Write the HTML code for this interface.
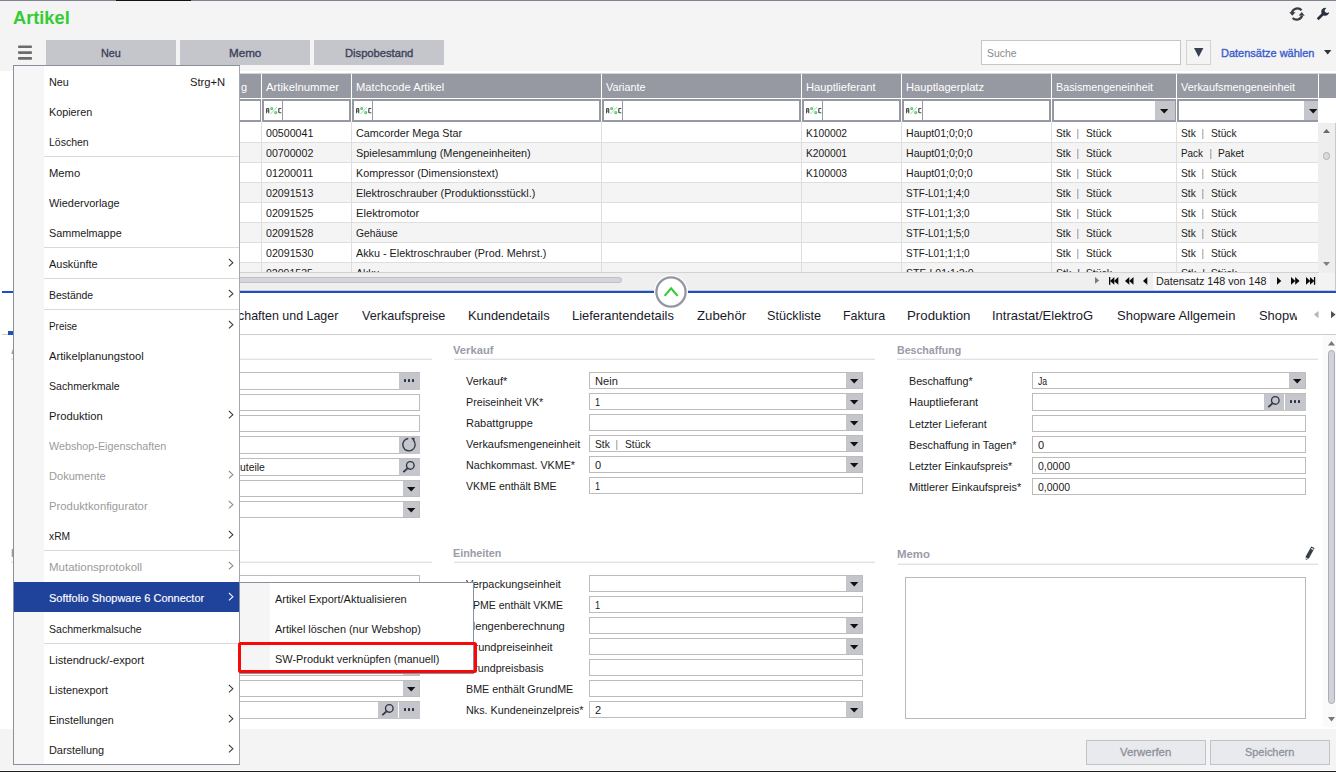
<!DOCTYPE html>
<html lang="de"><head><meta charset="utf-8"><title>Artikel</title>
<style>
html,body{margin:0;padding:0;overflow:hidden;}
body{width:1336px;height:772px;position:relative;overflow:hidden;background:#fff;font-family:"Liberation Sans", sans-serif;font-size:11px;}
div,svg,span.t{position:absolute;}
span.t{white-space:pre;line-height:1;transform-origin:0 0;}
svg{overflow:visible;}
</style></head><body>
<div style="left:0px;top:0px;width:1336px;height:71px;background:#f4f4f4;"></div>
<div style="left:0px;top:0px;width:1336px;height:1px;background:#7e8391;"></div>
<div style="left:116px;top:0px;width:75px;height:1px;background:#111111;"></div>
<span class="t" style="left:12.88px;top:9px;font-size:18px;color:#33cc33;transform:scaleX(1.0119);font-weight:700;">Artikel</span>
<svg style="left:18.4px;top:44px" width="14" height="17" viewBox="0 0 14 17"><rect x="0" y="1.5" width="14" height="2.6" rx="0.8" fill="#6c6c6c"/><rect x="0" y="7.3" width="14" height="2.6" rx="0.8" fill="#6c6c6c"/><rect x="0" y="13.1" width="14" height="2.6" rx="0.8" fill="#6c6c6c"/></svg>
<div style="left:46px;top:40px;width:130px;height:25px;background:#c5c6cc;"></div>
<span class="t" style="left:100.86px;top:48px;font-size:11px;color:#3c425c;transform:scaleX(0.9833);-webkit-text-stroke:0.35px #3c425c;">Neu</span>
<div style="left:180px;top:40px;width:130px;height:25px;background:#c5c6cc;"></div>
<span class="t" style="left:228.86px;top:48px;font-size:11px;color:#3c425c;transform:scaleX(1.0585);-webkit-text-stroke:0.35px #3c425c;">Memo</span>
<div style="left:314px;top:40px;width:130px;height:25px;background:#c5c6cc;"></div>
<span class="t" style="left:344.66px;top:48px;font-size:11px;color:#3c425c;transform:scaleX(1.0159);-webkit-text-stroke:0.35px #3c425c;">Dispobestand</span>
<div style="left:981px;top:40px;width:200px;height:25px;background:#ffffff;border:1px solid #c6c6c6;box-sizing:border-box;"></div>
<span class="t" style="left:987.06px;top:48px;font-size:11px;color:#8a8a8a;transform:scaleX(0.9470);">Suche</span>
<div style="left:1186px;top:40px;width:25px;height:25px;background:#f4f4f4;border:1px solid #d2d2d2;box-sizing:border-box;"></div>
<svg style="left:1194px;top:48px" width="10" height="9" viewBox="0 0 10 9"><path d="M0,0 L9.4,0 L4.7,9 Z" fill="#3a3f52"/></svg>
<span class="t" style="left:1221.26px;top:48px;font-size:11px;color:#3a5ccc;transform:scaleX(0.9988);-webkit-text-stroke:0.35px #3a5ccc;">Datensätze wählen</span>
<svg style="left:1324px;top:50px" width="8" height="5" viewBox="0 0 8 5"><path d="M0,0 L7.4,0 L3.7,4.4 Z" fill="#333"/></svg>
<svg style="left:1289px;top:6px" width="16" height="16" viewBox="0 0 16 16"><g fill="none" stroke="#3b3d44" stroke-width="2.2"><path d="M2.9,6.6 A5.7,5.7 0 0 1 12.6,4.3"/><path d="M13.1,9.6 A5.7,5.7 0 0 1 3.6,12.0"/></g><path d="M0.3,5.9 L6.5,6.3 L3.2,9.7 Z" fill="#3b3d44"/><path d="M15.7,9.7 L9.7,9.5 L12.8,6.1 Z" fill="#3b3d44"/></svg>
<svg style="left:1316px;top:7px" width="14" height="14" viewBox="0 0 14 14"><path d="M1.7,12.2 L8.2,5.7" stroke="#2b3040" stroke-width="2.7" fill="none" stroke-linecap="butt"/><path d="M10.4,0.9 A4.0,4.0 0 1 0 13.2,5.2 L11.0,6.0 L9.0,5.0 L8.6,2.9 Z" fill="#2b3040"/></svg>
<div style="left:13px;top:73px;width:1323px;height:1px;background:#d4d4d8;"></div>
<div style="left:13px;top:74px;width:1323px;height:24px;background:#9698a2;"></div>
<div style="left:13px;top:99px;width:1305px;height:23px;background:#9698a2;"></div>
<div style="left:13px;top:142px;width:1305px;height:1px;background:#dedede;"></div>
<div style="left:13px;top:143px;width:1305px;height:20px;background:#f4f4f4;"></div>
<div style="left:13px;top:162px;width:1305px;height:1px;background:#dedede;"></div>
<div style="left:13px;top:182px;width:1305px;height:1px;background:#dedede;"></div>
<div style="left:13px;top:183px;width:1305px;height:20px;background:#f4f4f4;"></div>
<div style="left:13px;top:202px;width:1305px;height:1px;background:#dedede;"></div>
<div style="left:13px;top:222px;width:1305px;height:1px;background:#dedede;"></div>
<div style="left:13px;top:223px;width:1305px;height:20px;background:#f4f4f4;"></div>
<div style="left:13px;top:242px;width:1305px;height:1px;background:#dedede;"></div>
<div style="left:13px;top:262px;width:1305px;height:1px;background:#dedede;"></div>
<div style="left:13px;top:263px;width:1305px;height:9px;background:#f4f4f4;"></div>
<div style="left:261px;top:74px;width:1px;height:48px;background:#ffffff;"></div>
<div style="left:261px;top:122px;width:1px;height:150px;background:#dedede;"></div>
<div style="left:351px;top:74px;width:1px;height:48px;background:#ffffff;"></div>
<div style="left:351px;top:122px;width:1px;height:150px;background:#dedede;"></div>
<div style="left:601px;top:74px;width:1px;height:48px;background:#ffffff;"></div>
<div style="left:601px;top:122px;width:1px;height:150px;background:#dedede;"></div>
<div style="left:801px;top:74px;width:1px;height:48px;background:#ffffff;"></div>
<div style="left:801px;top:122px;width:1px;height:150px;background:#dedede;"></div>
<div style="left:901px;top:74px;width:1px;height:48px;background:#ffffff;"></div>
<div style="left:901px;top:122px;width:1px;height:150px;background:#dedede;"></div>
<div style="left:1051px;top:74px;width:1px;height:48px;background:#ffffff;"></div>
<div style="left:1051px;top:122px;width:1px;height:150px;background:#dedede;"></div>
<div style="left:1176px;top:74px;width:1px;height:48px;background:#ffffff;"></div>
<div style="left:1176px;top:122px;width:1px;height:150px;background:#dedede;"></div>
<div style="left:1318px;top:74px;width:1px;height:48px;background:#ffffff;"></div>
<div style="left:13px;top:101px;width:247px;height:19px;background:#ffffff;"></div>
<div style="left:264px;top:101px;width:85px;height:19px;background:#ffffff;"></div>
<div style="left:354px;top:101px;width:245px;height:19px;background:#ffffff;"></div>
<div style="left:604px;top:101px;width:195px;height:19px;background:#ffffff;"></div>
<div style="left:804px;top:101px;width:95px;height:19px;background:#ffffff;"></div>
<div style="left:904px;top:101px;width:145px;height:19px;background:#ffffff;"></div>
<div style="left:1054px;top:101px;width:120px;height:19px;background:#ffffff;"></div>
<div style="left:1179px;top:101px;width:137px;height:19px;background:#ffffff;"></div>
<svg style="left:266px;top:108px" width="16" height="6" viewBox="0 0 16 6"><g fill="#484848"><path d="M0,1.2 Q0,0 1.2,0 L2.1,0 Q3.3,0 3.3,1.2 L3.3,5.3 L2.2,5.3 L2.2,3.6 L1.1,3.6 L1.1,5.3 L0,5.3 Z M1.1,1.2 L1.1,2.5 L2.2,2.5 L2.2,1.2 Z" fill-rule="evenodd"/><path d="M12.2,1.2 Q12.2,0 13.4,0 L15.3,0 L15.3,1.1 L13.4,1.1 L13.4,4.2 L15.3,4.2 L15.3,5.3 L13.4,5.3 Q12.2,5.3 12.2,4.1 Z"/></g><g fill="none" stroke="#62c679"><circle cx="5.7" cy="0.5" r="1.0" stroke-width="1.25"/><circle cx="9.7" cy="4.6" r="1.0" stroke-width="1.25"/><path d="M11.0,-0.9 L4.4,6.0" stroke-width="0.9" stroke="#8fd89e"/></g></svg>
<div style="left:282px;top:101px;width:1px;height:19px;background:#9698a2;"></div>
<svg style="left:356px;top:108px" width="16" height="6" viewBox="0 0 16 6"><g fill="#484848"><path d="M0,1.2 Q0,0 1.2,0 L2.1,0 Q3.3,0 3.3,1.2 L3.3,5.3 L2.2,5.3 L2.2,3.6 L1.1,3.6 L1.1,5.3 L0,5.3 Z M1.1,1.2 L1.1,2.5 L2.2,2.5 L2.2,1.2 Z" fill-rule="evenodd"/><path d="M12.2,1.2 Q12.2,0 13.4,0 L15.3,0 L15.3,1.1 L13.4,1.1 L13.4,4.2 L15.3,4.2 L15.3,5.3 L13.4,5.3 Q12.2,5.3 12.2,4.1 Z"/></g><g fill="none" stroke="#62c679"><circle cx="5.7" cy="0.5" r="1.0" stroke-width="1.25"/><circle cx="9.7" cy="4.6" r="1.0" stroke-width="1.25"/><path d="M11.0,-0.9 L4.4,6.0" stroke-width="0.9" stroke="#8fd89e"/></g></svg>
<div style="left:372px;top:101px;width:1px;height:19px;background:#9698a2;"></div>
<svg style="left:606px;top:108px" width="16" height="6" viewBox="0 0 16 6"><g fill="#484848"><path d="M0,1.2 Q0,0 1.2,0 L2.1,0 Q3.3,0 3.3,1.2 L3.3,5.3 L2.2,5.3 L2.2,3.6 L1.1,3.6 L1.1,5.3 L0,5.3 Z M1.1,1.2 L1.1,2.5 L2.2,2.5 L2.2,1.2 Z" fill-rule="evenodd"/><path d="M12.2,1.2 Q12.2,0 13.4,0 L15.3,0 L15.3,1.1 L13.4,1.1 L13.4,4.2 L15.3,4.2 L15.3,5.3 L13.4,5.3 Q12.2,5.3 12.2,4.1 Z"/></g><g fill="none" stroke="#62c679"><circle cx="5.7" cy="0.5" r="1.0" stroke-width="1.25"/><circle cx="9.7" cy="4.6" r="1.0" stroke-width="1.25"/><path d="M11.0,-0.9 L4.4,6.0" stroke-width="0.9" stroke="#8fd89e"/></g></svg>
<div style="left:622px;top:101px;width:1px;height:19px;background:#9698a2;"></div>
<svg style="left:806px;top:108px" width="16" height="6" viewBox="0 0 16 6"><g fill="#484848"><path d="M0,1.2 Q0,0 1.2,0 L2.1,0 Q3.3,0 3.3,1.2 L3.3,5.3 L2.2,5.3 L2.2,3.6 L1.1,3.6 L1.1,5.3 L0,5.3 Z M1.1,1.2 L1.1,2.5 L2.2,2.5 L2.2,1.2 Z" fill-rule="evenodd"/><path d="M12.2,1.2 Q12.2,0 13.4,0 L15.3,0 L15.3,1.1 L13.4,1.1 L13.4,4.2 L15.3,4.2 L15.3,5.3 L13.4,5.3 Q12.2,5.3 12.2,4.1 Z"/></g><g fill="none" stroke="#62c679"><circle cx="5.7" cy="0.5" r="1.0" stroke-width="1.25"/><circle cx="9.7" cy="4.6" r="1.0" stroke-width="1.25"/><path d="M11.0,-0.9 L4.4,6.0" stroke-width="0.9" stroke="#8fd89e"/></g></svg>
<div style="left:822px;top:101px;width:1px;height:19px;background:#9698a2;"></div>
<svg style="left:906px;top:108px" width="16" height="6" viewBox="0 0 16 6"><g fill="#484848"><path d="M0,1.2 Q0,0 1.2,0 L2.1,0 Q3.3,0 3.3,1.2 L3.3,5.3 L2.2,5.3 L2.2,3.6 L1.1,3.6 L1.1,5.3 L0,5.3 Z M1.1,1.2 L1.1,2.5 L2.2,2.5 L2.2,1.2 Z" fill-rule="evenodd"/><path d="M12.2,1.2 Q12.2,0 13.4,0 L15.3,0 L15.3,1.1 L13.4,1.1 L13.4,4.2 L15.3,4.2 L15.3,5.3 L13.4,5.3 Q12.2,5.3 12.2,4.1 Z"/></g><g fill="none" stroke="#62c679"><circle cx="5.7" cy="0.5" r="1.0" stroke-width="1.25"/><circle cx="9.7" cy="4.6" r="1.0" stroke-width="1.25"/><path d="M11.0,-0.9 L4.4,6.0" stroke-width="0.9" stroke="#8fd89e"/></g></svg>
<div style="left:922px;top:101px;width:1px;height:19px;background:#9698a2;"></div>
<div style="left:1155px;top:101px;width:20px;height:19px;background:#c5c6cc;"></div>
<svg style="left:1160px;top:109px" width="9" height="5" viewBox="0 0 9 5"><path d="M0,0 L8.4,0 L4.2,4.4 Z" fill="#111"/></svg>
<div style="left:1304px;top:101px;width:14px;height:19px;background:#c5c6cc;"></div>
<svg style="left:1309px;top:109px" width="9" height="5" viewBox="0 0 9 5"><path d="M0,0 L8.4,0 L4.2,4.4 Z" fill="#111"/></svg>
<div style="left:1318px;top:99px;width:18px;height:24px;background:#ffffff;"></div>
<span class="t" style="left:241.16px;top:82px;font-size:11px;color:#ffffff;transform:scaleX(1.0041);">g</span>
<span class="t" style="left:265.56px;top:82px;font-size:11px;color:#ffffff;transform:scaleX(1.0302);">Artikelnummer</span>
<span class="t" style="left:355.86px;top:82px;font-size:11px;color:#ffffff;transform:scaleX(1.0164);">Matchcode Artikel</span>
<span class="t" style="left:605.56px;top:82px;font-size:11px;color:#ffffff;transform:scaleX(0.9849);">Variante</span>
<span class="t" style="left:806.06px;top:82px;font-size:11px;color:#ffffff;transform:scaleX(1.0153);">Hauptlieferant</span>
<span class="t" style="left:906.06px;top:82px;font-size:11px;color:#ffffff;transform:scaleX(1.0128);">Hauptlagerplatz</span>
<span class="t" style="left:1056.06px;top:82px;font-size:11px;color:#ffffff;transform:scaleX(0.9795);">Basismengeneinheit</span>
<span class="t" style="left:1180.86px;top:82px;font-size:11px;color:#ffffff;transform:scaleX(0.9920);">Verkaufsmengeneinheit</span>
<span class="t" style="left:265.56px;top:128px;font-size:11px;color:#1a1a1a;transform:scaleX(0.9673);">00500041</span>
<span class="t" style="left:355.86px;top:128px;font-size:11px;color:#1a1a1a;transform:scaleX(0.9800);">Camcorder Mega Star</span>
<span class="t" style="left:806.06px;top:128px;font-size:11px;color:#1a1a1a;transform:scaleX(0.9320);">K100002</span>
<span class="t" style="left:906.06px;top:128px;font-size:11px;color:#1a1a1a;transform:scaleX(0.9627);">Haupt01;0;0;0</span>
<span class="t" style="left:1056.06px;top:128px;font-size:11px;color:#1a1a1a;transform:scaleX(0.9273);">Stk</span>
<span class="t" style="left:1077.36px;top:128px;font-size:11px;color:#1a1a1a;transform:scaleX(0.5421);">|</span>
<span class="t" style="left:1085.56px;top:128px;font-size:11px;color:#1a1a1a;transform:scaleX(0.9286);">Stück</span>
<span class="t" style="left:1181.06px;top:128px;font-size:11px;color:#1a1a1a;transform:scaleX(0.9273);">Stk</span>
<span class="t" style="left:1202.36px;top:128px;font-size:11px;color:#1a1a1a;transform:scaleX(0.5421);">|</span>
<span class="t" style="left:1210.56px;top:128px;font-size:11px;color:#1a1a1a;transform:scaleX(0.9286);">Stück</span>
<span class="t" style="left:265.56px;top:148px;font-size:11px;color:#1a1a1a;transform:scaleX(0.9673);">00700002</span>
<span class="t" style="left:355.86px;top:148px;font-size:11px;color:#1a1a1a;transform:scaleX(0.9923);">Spielesammlung (Mengeneinheiten)</span>
<span class="t" style="left:806.06px;top:148px;font-size:11px;color:#1a1a1a;transform:scaleX(0.9320);">K200001</span>
<span class="t" style="left:906.06px;top:148px;font-size:11px;color:#1a1a1a;transform:scaleX(0.9627);">Haupt01;0;0;0</span>
<span class="t" style="left:1056.06px;top:148px;font-size:11px;color:#1a1a1a;transform:scaleX(0.9273);">Stk</span>
<span class="t" style="left:1077.36px;top:148px;font-size:11px;color:#1a1a1a;transform:scaleX(0.5421);">|</span>
<span class="t" style="left:1085.56px;top:148px;font-size:11px;color:#1a1a1a;transform:scaleX(0.9286);">Stück</span>
<span class="t" style="left:1181.06px;top:148px;font-size:11px;color:#1a1a1a;transform:scaleX(0.9011);">Pack</span>
<span class="t" style="left:1209.66px;top:148px;font-size:11px;color:#1a1a1a;transform:scaleX(0.5421);">|</span>
<span class="t" style="left:1217.66px;top:148px;font-size:11px;color:#1a1a1a;transform:scaleX(0.9222);">Paket</span>
<span class="t" style="left:265.56px;top:168px;font-size:11px;color:#1a1a1a;transform:scaleX(0.9839);">01200011</span>
<span class="t" style="left:355.86px;top:168px;font-size:11px;color:#1a1a1a;transform:scaleX(0.9819);">Kompressor (Dimensionstext)</span>
<span class="t" style="left:806.06px;top:168px;font-size:11px;color:#1a1a1a;transform:scaleX(0.9320);">K100003</span>
<span class="t" style="left:906.06px;top:168px;font-size:11px;color:#1a1a1a;transform:scaleX(0.9627);">Haupt01;0;0;0</span>
<span class="t" style="left:1056.06px;top:168px;font-size:11px;color:#1a1a1a;transform:scaleX(0.9273);">Stk</span>
<span class="t" style="left:1077.36px;top:168px;font-size:11px;color:#1a1a1a;transform:scaleX(0.5421);">|</span>
<span class="t" style="left:1085.56px;top:168px;font-size:11px;color:#1a1a1a;transform:scaleX(0.9286);">Stück</span>
<span class="t" style="left:1181.06px;top:168px;font-size:11px;color:#1a1a1a;transform:scaleX(0.9273);">Stk</span>
<span class="t" style="left:1202.36px;top:168px;font-size:11px;color:#1a1a1a;transform:scaleX(0.5421);">|</span>
<span class="t" style="left:1210.56px;top:168px;font-size:11px;color:#1a1a1a;transform:scaleX(0.9286);">Stück</span>
<span class="t" style="left:265.56px;top:188px;font-size:11px;color:#1a1a1a;transform:scaleX(0.9673);">02091513</span>
<span class="t" style="left:355.86px;top:188px;font-size:11px;color:#1a1a1a;transform:scaleX(0.9806);">Elektroschrauber (Produktionsstückl.)</span>
<span class="t" style="left:906.06px;top:188px;font-size:11px;color:#1a1a1a;transform:scaleX(0.9036);">STF-L01;1;4;0</span>
<span class="t" style="left:1056.06px;top:188px;font-size:11px;color:#1a1a1a;transform:scaleX(0.9273);">Stk</span>
<span class="t" style="left:1077.36px;top:188px;font-size:11px;color:#1a1a1a;transform:scaleX(0.5421);">|</span>
<span class="t" style="left:1085.56px;top:188px;font-size:11px;color:#1a1a1a;transform:scaleX(0.9286);">Stück</span>
<span class="t" style="left:1181.06px;top:188px;font-size:11px;color:#1a1a1a;transform:scaleX(0.9273);">Stk</span>
<span class="t" style="left:1202.36px;top:188px;font-size:11px;color:#1a1a1a;transform:scaleX(0.5421);">|</span>
<span class="t" style="left:1210.56px;top:188px;font-size:11px;color:#1a1a1a;transform:scaleX(0.9286);">Stück</span>
<span class="t" style="left:265.56px;top:208px;font-size:11px;color:#1a1a1a;transform:scaleX(0.9673);">02091525</span>
<span class="t" style="left:355.86px;top:208px;font-size:11px;color:#1a1a1a;transform:scaleX(1.0143);">Elektromotor</span>
<span class="t" style="left:906.06px;top:208px;font-size:11px;color:#1a1a1a;transform:scaleX(0.9036);">STF-L01;1;3;0</span>
<span class="t" style="left:1056.06px;top:208px;font-size:11px;color:#1a1a1a;transform:scaleX(0.9273);">Stk</span>
<span class="t" style="left:1077.36px;top:208px;font-size:11px;color:#1a1a1a;transform:scaleX(0.5421);">|</span>
<span class="t" style="left:1085.56px;top:208px;font-size:11px;color:#1a1a1a;transform:scaleX(0.9286);">Stück</span>
<span class="t" style="left:1181.06px;top:208px;font-size:11px;color:#1a1a1a;transform:scaleX(0.9273);">Stk</span>
<span class="t" style="left:1202.36px;top:208px;font-size:11px;color:#1a1a1a;transform:scaleX(0.5421);">|</span>
<span class="t" style="left:1210.56px;top:208px;font-size:11px;color:#1a1a1a;transform:scaleX(0.9286);">Stück</span>
<span class="t" style="left:265.56px;top:228px;font-size:11px;color:#1a1a1a;transform:scaleX(0.9673);">02091528</span>
<span class="t" style="left:355.86px;top:228px;font-size:11px;color:#1a1a1a;transform:scaleX(0.9349);">Gehäuse</span>
<span class="t" style="left:906.06px;top:228px;font-size:11px;color:#1a1a1a;transform:scaleX(0.9036);">STF-L01;1;5;0</span>
<span class="t" style="left:1056.06px;top:228px;font-size:11px;color:#1a1a1a;transform:scaleX(0.9273);">Stk</span>
<span class="t" style="left:1077.36px;top:228px;font-size:11px;color:#1a1a1a;transform:scaleX(0.5421);">|</span>
<span class="t" style="left:1085.56px;top:228px;font-size:11px;color:#1a1a1a;transform:scaleX(0.9286);">Stück</span>
<span class="t" style="left:1181.06px;top:228px;font-size:11px;color:#1a1a1a;transform:scaleX(0.9273);">Stk</span>
<span class="t" style="left:1202.36px;top:228px;font-size:11px;color:#1a1a1a;transform:scaleX(0.5421);">|</span>
<span class="t" style="left:1210.56px;top:228px;font-size:11px;color:#1a1a1a;transform:scaleX(0.9286);">Stück</span>
<span class="t" style="left:265.56px;top:248px;font-size:11px;color:#1a1a1a;transform:scaleX(0.9673);">02091530</span>
<span class="t" style="left:355.86px;top:248px;font-size:11px;color:#1a1a1a;transform:scaleX(0.9817);">Akku - Elektroschrauber (Prod. Mehrst.)</span>
<span class="t" style="left:906.06px;top:248px;font-size:11px;color:#1a1a1a;transform:scaleX(0.9036);">STF-L01;1;1;0</span>
<span class="t" style="left:1056.06px;top:248px;font-size:11px;color:#1a1a1a;transform:scaleX(0.9273);">Stk</span>
<span class="t" style="left:1077.36px;top:248px;font-size:11px;color:#1a1a1a;transform:scaleX(0.5421);">|</span>
<span class="t" style="left:1085.56px;top:248px;font-size:11px;color:#1a1a1a;transform:scaleX(0.9286);">Stück</span>
<span class="t" style="left:1181.06px;top:248px;font-size:11px;color:#1a1a1a;transform:scaleX(0.9273);">Stk</span>
<span class="t" style="left:1202.36px;top:248px;font-size:11px;color:#1a1a1a;transform:scaleX(0.5421);">|</span>
<span class="t" style="left:1210.56px;top:248px;font-size:11px;color:#1a1a1a;transform:scaleX(0.9286);">Stück</span>
<div style="left:240px;top:263px;width:1079px;height:9px;overflow:hidden"><span class="t" style="left:26px;top:5px;font-size:11px;color:#1a1a1a;transform:scaleX(0.96)">02091535</span><span class="t" style="left:116px;top:5px;font-size:11px;color:#1a1a1a;transform:scaleX(0.96)">Akku</span><span class="t" style="left:666px;top:5px;font-size:11px;color:#1a1a1a;transform:scaleX(0.96)">STF-L01;1;2;0</span><span class="t" style="left:816px;top:5px;font-size:11px;color:#1a1a1a;transform:scaleX(0.96)">Stk  |  Stück</span><span class="t" style="left:941px;top:5px;font-size:11px;color:#1a1a1a;transform:scaleX(0.96)">Stk  |  Stück</span></div>
<div style="left:1318px;top:123px;width:17px;height:149px;background:#eeeeef;"></div>
<svg style="left:1323px;top:129px" width="7" height="4" viewBox="0 0 7 4"><path d="M0,3.9 L7,3.9 L3.5,0 Z" fill="#6a6a6a"/></svg>
<svg style="left:1323px;top:262px" width="7" height="4" viewBox="0 0 7 4"><path d="M0,0 L7,0 L3.5,4 Z" fill="#808080"/></svg>
<div style="left:1323px;top:152px;width:7px;height:8px;background:#dadade;border:1px solid #b0b0b6;box-sizing:border-box;border-radius:4px;"></div>
<div style="left:13px;top:272px;width:1323px;height:19px;background:#efeff0;"></div>
<div style="left:13px;top:272px;width:1306px;height:1px;background:#d2d2d2;"></div>
<div style="left:13px;top:290px;width:1323px;height:1px;background:#c8c8c8;"></div>
<div style="left:1318px;top:273px;width:17px;height:17px;background:#f3f3f3;"></div>
<div style="left:200px;top:277px;width:422px;height:6px;background:#d5d6db;border:1px solid #bfc0c8;box-sizing:border-box;border-radius:3px;"></div>
<div style="left:1153px;top:273px;width:117px;height:17px;background:#f9f9f9;"></div>
<span class="t" style="left:1156.36px;top:276px;font-size:11px;color:#1a1a1a;transform:scaleX(0.9762);">Datensatz 148 von 148</span>
<svg style="left:1094.9px;top:277.2px" width="6" height="8" viewBox="0 0 6 8"><path d="M0,0 L0,6.8 L4.2,3.4 Z" fill="#7a7a7a"/></svg>
<svg style="left:1108.9px;top:277px" width="12" height="8" viewBox="0 0 12 8"><rect x="0" y="0" width="1.3" height="7.8" fill="#0a0a0a"/><path d="M5.3,0 L5.3,7.8 L1.0,3.9 Z" fill="#0a0a0a"/><path d="M9.3,0 L9.3,7.8 L5.0,3.9 Z" fill="#0a0a0a"/></svg>
<svg style="left:1124.9px;top:277px" width="12" height="8" viewBox="0 0 12 8"><path d="M4.3,0 L4.3,7.8 L0,3.9 Z" fill="#0a0a0a"/><path d="M8.5,0 L8.5,7.8 L4.2,3.9 Z" fill="#0a0a0a"/></svg>
<svg style="left:1142.8px;top:277px" width="6" height="8" viewBox="0 0 6 8"><path d="M4.3,0 L4.3,7.8 L0,3.9 Z" fill="#0a0a0a"/></svg>
<svg style="left:1276.8px;top:277px" width="6" height="8" viewBox="0 0 6 8"><path d="M0,0 L0,7.8 L4.3,3.9 Z" fill="#0a0a0a"/></svg>
<svg style="left:1290.8px;top:277px" width="12" height="8" viewBox="0 0 12 8"><path d="M0,0 L0,7.8 L4.3,3.9 Z" fill="#0a0a0a"/><path d="M4.2,0 L4.2,7.8 L8.5,3.9 Z" fill="#0a0a0a"/></svg>
<svg style="left:1305.8px;top:277px" width="12" height="8" viewBox="0 0 12 8"><path d="M0,0 L0,7.8 L4.3,3.9 Z" fill="#0a0a0a"/><path d="M4.0,0 L4.0,7.8 L8.3,3.9 Z" fill="#0a0a0a"/><rect x="7.9" y="0" width="1.3" height="7.8" fill="#0a0a0a"/></svg>
<div style="left:1335px;top:123px;width:1px;height:168px;background:#c9c9c9;"></div>
<div style="left:0px;top:291px;width:1336px;height:2px;background:#1b4fc4;"></div>
<div style="left:0px;top:291px;width:2px;height:2px;background:#ffffff;"></div>
<div style="left:654px;top:275px;width:34px;height:34px;border-radius:17px;background:#fff"></div>
<svg style="left:654px;top:275px" width="34" height="34" viewBox="0 0 34 34"><circle cx="17" cy="17" r="14.6" fill="#fff" stroke="#9496a2" stroke-width="2.3"/></svg>
<svg style="left:663px;top:286px" width="16" height="11" viewBox="0 0 16 11"><path d="M1.6,9.9 L8.1,2.4 L14.6,9.9" fill="none" stroke="#2ecc2e" stroke-width="2.0" stroke-linejoin="miter"/></svg>
<div style="left:2px;top:334px;width:1334px;height:1px;background:#cdcdcd;"></div>
<div style="left:8px;top:331px;width:6px;height:4px;background:#1b4fc4;"></div>
<span class="t" style="left:199.98px;top:309px;font-size:13px;color:#1a1a2a;transform:scaleX(0.9570);">Eigenschaften und Lager</span>
<span class="t" style="left:362.48px;top:309px;font-size:13px;color:#1a1a2a;transform:scaleX(0.9680);">Verkaufspreise</span>
<span class="t" style="left:468.28px;top:309px;font-size:13px;color:#1a1a2a;transform:scaleX(0.9908);">Kundendetails</span>
<span class="t" style="left:572.28px;top:309px;font-size:13px;color:#1a1a2a;transform:scaleX(0.9923);">Lieferantendetails</span>
<span class="t" style="left:697.48px;top:309px;font-size:13px;color:#1a1a2a;transform:scaleX(1.0150);">Zubehör</span>
<span class="t" style="left:767.48px;top:309px;font-size:13px;color:#1a1a2a;transform:scaleX(0.9732);">Stückliste</span>
<span class="t" style="left:843.48px;top:309px;font-size:13px;color:#1a1a2a;transform:scaleX(0.9563);">Faktura</span>
<span class="t" style="left:907.18px;top:309px;font-size:13px;color:#1a1a2a;transform:scaleX(1.0208);">Produktion</span>
<span class="t" style="left:992.48px;top:309px;font-size:13px;color:#1a1a2a;transform:scaleX(0.9999);">Intrastat/ElektroG</span>
<span class="t" style="left:1117.18px;top:309px;font-size:13px;color:#1a1a2a;transform:scaleX(0.9993);">Shopware Allgemein</span>
<div style="left:1258.98px;top:307px;width:38.2px;height:19px;overflow:hidden"><span class="t" style="left:0;top:2px;font-size:13px;color:#1a1a2a;transform:scaleX(0.9932);">Shopware</span></div>
<svg style="left:1313.8px;top:310.6px" width="6" height="8" viewBox="0 0 6 8"><path d="M4.5,0 L4.5,7.2 L0,3.6 Z" fill="#b4b4b4"/></svg>
<svg style="left:1330.9px;top:310.6px" width="5" height="8" viewBox="0 0 5 8"><path d="M0,0 L0,7.2 L4.6,3.6 Z" fill="#505050"/></svg>
<span class="t" style="left:10.76px;top:345px;font-size:11px;color:#9a9ca8;transform:scaleX(0.9576);font-weight:700;">Allgemein</span>
<div style="left:11px;top:358px;width:421px;height:1px;background:#f3f3f5;"></div>
<div style="left:11px;top:359px;width:421px;height:1px;background:#e2e2e6;"></div>
<span class="t" style="left:453.36px;top:345px;font-size:11px;color:#9a9ca8;transform:scaleX(1.0176);font-weight:700;">Verkauf</span>
<div style="left:453.8px;top:358px;width:421.7px;height:1px;background:#f3f3f5;"></div>
<div style="left:453.8px;top:359px;width:421.7px;height:1px;background:#e2e2e6;"></div>
<span class="t" style="left:896.76px;top:345px;font-size:11px;color:#9a9ca8;transform:scaleX(0.9644);font-weight:700;">Beschaffung</span>
<div style="left:897.2px;top:358px;width:420.79999999999995px;height:1px;background:#f3f3f5;"></div>
<div style="left:897.2px;top:359px;width:420.79999999999995px;height:1px;background:#e2e2e6;"></div>
<span class="t" style="left:10.76px;top:548px;font-size:11px;color:#9a9ca8;transform:scaleX(0.9483);font-weight:700;">Kennzeichen</span>
<div style="left:11px;top:561px;width:421px;height:1px;background:#f3f3f5;"></div>
<div style="left:11px;top:562px;width:421px;height:1px;background:#e2e2e6;"></div>
<span class="t" style="left:453.36px;top:548px;font-size:11px;color:#9a9ca8;transform:scaleX(0.9765);font-weight:700;">Einheiten</span>
<div style="left:453.8px;top:561px;width:421.7px;height:1px;background:#f3f3f5;"></div>
<div style="left:453.8px;top:562px;width:421.7px;height:1px;background:#e2e2e6;"></div>
<span class="t" style="left:897.16px;top:549px;font-size:11px;color:#9a9ca8;transform:scaleX(1.0368);font-weight:700;">Memo</span>
<div style="left:897.6px;top:563px;width:420.4px;height:1px;background:#f3f3f5;"></div>
<div style="left:897.6px;top:564px;width:420.4px;height:1px;background:#e2e2e6;"></div>
<div style="left:146px;top:372px;width:274px;height:18px;background:#ffffff;border:1px solid #bdbcbb;box-sizing:border-box;"></div>
<div style="left:399px;top:373px;width:21px;height:17px;background:#c5c6cc;"></div>
<div style="left:404px;top:379px;width:2px;height:3px;background:#2f3346;border-radius:0.5px;"></div>
<div style="left:408px;top:379px;width:2px;height:3px;background:#2f3346;border-radius:0.5px;"></div>
<div style="left:412px;top:379px;width:2px;height:3px;background:#2f3346;border-radius:0.5px;"></div>
<div style="left:146px;top:394px;width:274px;height:17px;background:#ffffff;border:1px solid #bdbcbb;box-sizing:border-box;"></div>
<div style="left:146px;top:415px;width:274px;height:17px;background:#ffffff;border:1px solid #bdbcbb;box-sizing:border-box;"></div>
<div style="left:146px;top:436px;width:274px;height:18px;background:#ffffff;border:1px solid #bdbcbb;box-sizing:border-box;"></div>
<div style="left:399px;top:437px;width:21px;height:17px;background:#c5c6cc;"></div>
<svg style="left:399px;top:437px" width="21" height="17" viewBox="0 0 21 17"><path d="M9.24,1.45 A6.2,6.2 0 1 0 14.38,3.22" fill="none" stroke="#353a4c" stroke-width="1.4"/><path d="M12.0,1.0 L15.5,0.8 L15.3,4.6 Z" fill="#353a4c"/></svg>
<div style="left:146px;top:458px;width:274px;height:18px;background:#ffffff;border:1px solid #bdbcbb;box-sizing:border-box;"></div>
<div style="left:399px;top:459px;width:21px;height:17px;background:#c5c6cc;"></div>
<svg style="left:402px;top:460px" width="14" height="14" viewBox="0 0 14 14"><circle cx="8.3" cy="5.4" r="3.8" fill="none" stroke="#2f3346" stroke-width="1.35"/><path d="M5.5,8.3 L1.3,12.1" stroke="#2f3346" stroke-width="1.8" fill="none"/></svg>
<span class="t" style="left:239.86px;top:462px;font-size:11px;color:#1a1a1a;transform:scaleX(0.9450);">uteile</span>
<div style="left:146px;top:480px;width:274px;height:17px;background:#ffffff;border:1px solid #bdbcbb;box-sizing:border-box;"></div>
<div style="left:403px;top:481px;width:16px;height:15px;background:#c5c6cc;"></div>
<svg style="left:407px;top:487px" width="9" height="5" viewBox="0 0 9 5"><path d="M0,0 L8.4,0 L4.2,4.4 Z" fill="#111"/></svg>
<div style="left:146px;top:501px;width:274px;height:17px;background:#ffffff;border:1px solid #bdbcbb;box-sizing:border-box;"></div>
<div style="left:403px;top:502px;width:16px;height:15px;background:#c5c6cc;"></div>
<svg style="left:407px;top:508px" width="9" height="5" viewBox="0 0 9 5"><path d="M0,0 L8.4,0 L4.2,4.4 Z" fill="#111"/></svg>
<div style="left:146px;top:575px;width:274px;height:17px;background:#ffffff;border:1px solid #bdbcbb;box-sizing:border-box;"></div>
<div style="left:146px;top:596px;width:274px;height:17px;background:#ffffff;border:1px solid #bdbcbb;box-sizing:border-box;"></div>
<div style="left:146px;top:617px;width:274px;height:17px;background:#ffffff;border:1px solid #bdbcbb;box-sizing:border-box;"></div>
<div style="left:146px;top:638px;width:274px;height:17px;background:#ffffff;border:1px solid #bdbcbb;box-sizing:border-box;"></div>
<div style="left:146px;top:659px;width:274px;height:17px;background:#ffffff;border:1px solid #bdbcbb;box-sizing:border-box;"></div>
<div style="left:403px;top:660px;width:16px;height:15px;background:#c5c6cc;"></div>
<svg style="left:407px;top:666px" width="9" height="5" viewBox="0 0 9 5"><path d="M0,0 L8.4,0 L4.2,4.4 Z" fill="#111"/></svg>
<div style="left:146px;top:680px;width:274px;height:17px;background:#ffffff;border:1px solid #bdbcbb;box-sizing:border-box;"></div>
<div style="left:403px;top:681px;width:16px;height:15px;background:#c5c6cc;"></div>
<svg style="left:407px;top:687px" width="9" height="5" viewBox="0 0 9 5"><path d="M0,0 L8.4,0 L4.2,4.4 Z" fill="#111"/></svg>
<div style="left:146px;top:701px;width:274px;height:18px;background:#ffffff;border:1px solid #bdbcbb;box-sizing:border-box;"></div>
<div style="left:378px;top:702px;width:20px;height:17px;background:#c5c6cc;"></div>
<svg style="left:381px;top:703px" width="14" height="14" viewBox="0 0 14 14"><circle cx="8.3" cy="5.4" r="3.8" fill="none" stroke="#2f3346" stroke-width="1.35"/><path d="M5.5,8.3 L1.3,12.1" stroke="#2f3346" stroke-width="1.8" fill="none"/></svg>
<div style="left:399px;top:702px;width:21px;height:17px;background:#c5c6cc;"></div>
<div style="left:404px;top:708px;width:2px;height:3px;background:#2f3346;border-radius:0.5px;"></div>
<div style="left:408px;top:708px;width:2px;height:3px;background:#2f3346;border-radius:0.5px;"></div>
<div style="left:412px;top:708px;width:2px;height:3px;background:#2f3346;border-radius:0.5px;"></div>
<span class="t" style="left:465.86px;top:376px;font-size:11px;color:#1a1a1a;transform:scaleX(0.9893);">Verkauf*</span>
<div style="left:589px;top:372px;width:274px;height:17px;background:#ffffff;border:1px solid #bdbcbb;box-sizing:border-box;"></div>
<div style="left:846px;top:373px;width:16px;height:15px;background:#c5c6cc;"></div>
<svg style="left:850px;top:379px" width="9" height="5" viewBox="0 0 9 5"><path d="M0,0 L8.4,0 L4.2,4.4 Z" fill="#111"/></svg>
<span class="t" style="left:595.16px;top:376px;font-size:11px;color:#1a1a1a;transform:scaleX(1.0099);">Nein</span>
<span class="t" style="left:465.86px;top:397px;font-size:11px;color:#1a1a1a;transform:scaleX(0.9717);">Preiseinheit VK*</span>
<div style="left:589px;top:393px;width:274px;height:17px;background:#ffffff;border:1px solid #bdbcbb;box-sizing:border-box;"></div>
<div style="left:846px;top:394px;width:16px;height:15px;background:#c5c6cc;"></div>
<svg style="left:850px;top:400px" width="9" height="5" viewBox="0 0 9 5"><path d="M0,0 L8.4,0 L4.2,4.4 Z" fill="#111"/></svg>
<span class="t" style="left:595.16px;top:397px;font-size:11px;color:#1a1a1a;transform:scaleX(0.8408);">1</span>
<span class="t" style="left:465.86px;top:418px;font-size:11px;color:#1a1a1a;transform:scaleX(1.0027);">Rabattgruppe</span>
<div style="left:589px;top:414px;width:274px;height:17px;background:#ffffff;border:1px solid #bdbcbb;box-sizing:border-box;"></div>
<div style="left:846px;top:415px;width:16px;height:15px;background:#c5c6cc;"></div>
<svg style="left:850px;top:421px" width="9" height="5" viewBox="0 0 9 5"><path d="M0,0 L8.4,0 L4.2,4.4 Z" fill="#111"/></svg>
<span class="t" style="left:465.86px;top:439px;font-size:11px;color:#1a1a1a;transform:scaleX(0.9937);">Verkaufsmengeneinheit</span>
<div style="left:589px;top:435px;width:274px;height:17px;background:#ffffff;border:1px solid #bdbcbb;box-sizing:border-box;"></div>
<div style="left:846px;top:436px;width:16px;height:15px;background:#c5c6cc;"></div>
<svg style="left:850px;top:442px" width="9" height="5" viewBox="0 0 9 5"><path d="M0,0 L8.4,0 L4.2,4.4 Z" fill="#111"/></svg>
<span class="t" style="left:595.16px;top:439px;font-size:11px;color:#1a1a1a;transform:scaleX(0.9273);">Stk</span>
<span class="t" style="left:616.46px;top:439px;font-size:11px;color:#1a1a1a;transform:scaleX(0.5421);">|</span>
<span class="t" style="left:624.66px;top:439px;font-size:11px;color:#1a1a1a;transform:scaleX(0.9286);">Stück</span>
<span class="t" style="left:465.86px;top:460px;font-size:11px;color:#1a1a1a;transform:scaleX(0.9739);">Nachkommast. VKME*</span>
<div style="left:589px;top:456px;width:274px;height:17px;background:#ffffff;border:1px solid #bdbcbb;box-sizing:border-box;"></div>
<div style="left:846px;top:457px;width:16px;height:15px;background:#c5c6cc;"></div>
<svg style="left:850px;top:463px" width="9" height="5" viewBox="0 0 9 5"><path d="M0,0 L8.4,0 L4.2,4.4 Z" fill="#111"/></svg>
<span class="t" style="left:595.16px;top:460px;font-size:11px;color:#1a1a1a;transform:scaleX(1.0041);">0</span>
<span class="t" style="left:465.86px;top:481px;font-size:11px;color:#1a1a1a;transform:scaleX(0.9617);">VKME enthält BME</span>
<div style="left:589px;top:477px;width:274px;height:17px;background:#ffffff;border:1px solid #bdbcbb;box-sizing:border-box;"></div>
<span class="t" style="left:595.16px;top:481px;font-size:11px;color:#1a1a1a;transform:scaleX(0.8408);">1</span>
<span class="t" style="left:909.26px;top:376px;font-size:11px;color:#1a1a1a;transform:scaleX(0.9755);">Beschaffung*</span>
<div style="left:1032px;top:372px;width:274px;height:17px;background:#ffffff;border:1px solid #bdbcbb;box-sizing:border-box;"></div>
<div style="left:1289px;top:373px;width:16px;height:15px;background:#c5c6cc;"></div>
<svg style="left:1293px;top:379px" width="9" height="5" viewBox="0 0 9 5"><path d="M0,0 L8.4,0 L4.2,4.4 Z" fill="#111"/></svg>
<span class="t" style="left:1038.16px;top:376px;font-size:11px;color:#1a1a1a;transform:scaleX(0.7871);">Ja</span>
<span class="t" style="left:909.26px;top:397px;font-size:11px;color:#1a1a1a;transform:scaleX(1.0095);">Hauptlieferant</span>
<div style="left:1032px;top:393px;width:274px;height:18px;background:#ffffff;border:1px solid #bdbcbb;box-sizing:border-box;"></div>
<span class="t" style="left:909.26px;top:419px;font-size:11px;color:#1a1a1a;transform:scaleX(0.9767);">Letzter Lieferant</span>
<div style="left:1032px;top:415px;width:274px;height:17px;background:#ffffff;border:1px solid #bdbcbb;box-sizing:border-box;"></div>
<span class="t" style="left:909.26px;top:440px;font-size:11px;color:#1a1a1a;transform:scaleX(0.9787);">Beschaffung in Tagen*</span>
<div style="left:1032px;top:436px;width:274px;height:17px;background:#ffffff;border:1px solid #bdbcbb;box-sizing:border-box;"></div>
<span class="t" style="left:1038.16px;top:440px;font-size:11px;color:#1a1a1a;transform:scaleX(1.0041);">0</span>
<span class="t" style="left:909.26px;top:461px;font-size:11px;color:#1a1a1a;transform:scaleX(0.9650);">Letzter Einkaufspreis*</span>
<div style="left:1032px;top:457px;width:274px;height:17px;background:#ffffff;border:1px solid #bdbcbb;box-sizing:border-box;"></div>
<span class="t" style="left:1038.16px;top:461px;font-size:11px;color:#1a1a1a;transform:scaleX(0.9523);">0,0000</span>
<span class="t" style="left:909.26px;top:482px;font-size:11px;color:#1a1a1a;transform:scaleX(0.9917);">Mittlerer Einkaufspreis*</span>
<div style="left:1032px;top:478px;width:274px;height:17px;background:#ffffff;border:1px solid #bdbcbb;box-sizing:border-box;"></div>
<span class="t" style="left:1038.16px;top:482px;font-size:11px;color:#1a1a1a;transform:scaleX(0.9523);">0,0000</span>
<div style="left:1264px;top:394px;width:20px;height:17px;background:#c5c6cc;"></div>
<svg style="left:1267px;top:395px" width="14" height="14" viewBox="0 0 14 14"><circle cx="8.3" cy="5.4" r="3.8" fill="none" stroke="#2f3346" stroke-width="1.35"/><path d="M5.5,8.3 L1.3,12.1" stroke="#2f3346" stroke-width="1.8" fill="none"/></svg>
<div style="left:1285px;top:394px;width:21px;height:17px;background:#c5c6cc;"></div>
<div style="left:1290px;top:400px;width:2px;height:3px;background:#2f3346;border-radius:0.5px;"></div>
<div style="left:1294px;top:400px;width:2px;height:3px;background:#2f3346;border-radius:0.5px;"></div>
<div style="left:1298px;top:400px;width:2px;height:3px;background:#2f3346;border-radius:0.5px;"></div>
<span class="t" style="left:465.86px;top:579px;font-size:11px;color:#1a1a1a;transform:scaleX(0.9879);">Verpackungseinheit</span>
<div style="left:589px;top:575px;width:274px;height:17px;background:#ffffff;border:1px solid #bdbcbb;box-sizing:border-box;"></div>
<div style="left:846px;top:576px;width:16px;height:15px;background:#c5c6cc;"></div>
<svg style="left:850px;top:582px" width="9" height="5" viewBox="0 0 9 5"><path d="M0,0 L8.4,0 L4.2,4.4 Z" fill="#111"/></svg>
<span class="t" style="left:465.86px;top:600px;font-size:11px;color:#1a1a1a;transform:scaleX(0.9571);">VPME enthält VKME</span>
<div style="left:589px;top:596px;width:274px;height:17px;background:#ffffff;border:1px solid #bdbcbb;box-sizing:border-box;"></div>
<span class="t" style="left:595.16px;top:600px;font-size:11px;color:#1a1a1a;transform:scaleX(0.8408);">1</span>
<span class="t" style="left:465.86px;top:621px;font-size:11px;color:#1a1a1a;transform:scaleX(1.0091);">Mengenberechnung</span>
<div style="left:589px;top:617px;width:274px;height:17px;background:#ffffff;border:1px solid #bdbcbb;box-sizing:border-box;"></div>
<div style="left:846px;top:618px;width:16px;height:15px;background:#c5c6cc;"></div>
<svg style="left:850px;top:624px" width="9" height="5" viewBox="0 0 9 5"><path d="M0,0 L8.4,0 L4.2,4.4 Z" fill="#111"/></svg>
<span class="t" style="left:465.86px;top:642px;font-size:11px;color:#1a1a1a;transform:scaleX(0.9966);">Grundpreiseinheit</span>
<div style="left:589px;top:638px;width:274px;height:17px;background:#ffffff;border:1px solid #bdbcbb;box-sizing:border-box;"></div>
<div style="left:846px;top:639px;width:16px;height:15px;background:#c5c6cc;"></div>
<svg style="left:850px;top:645px" width="9" height="5" viewBox="0 0 9 5"><path d="M0,0 L8.4,0 L4.2,4.4 Z" fill="#111"/></svg>
<span class="t" style="left:465.86px;top:663px;font-size:11px;color:#1a1a1a;transform:scaleX(0.9695);">Grundpreisbasis</span>
<div style="left:589px;top:659px;width:274px;height:17px;background:#ffffff;border:1px solid #bdbcbb;box-sizing:border-box;"></div>
<span class="t" style="left:465.86px;top:684px;font-size:11px;color:#1a1a1a;transform:scaleX(0.9744);">BME enthält GrundME</span>
<div style="left:589px;top:680px;width:274px;height:17px;background:#ffffff;border:1px solid #bdbcbb;box-sizing:border-box;"></div>
<span class="t" style="left:465.86px;top:705px;font-size:11px;color:#1a1a1a;transform:scaleX(0.9807);">Nks. Kundeneinzelpreis*</span>
<div style="left:589px;top:701px;width:274px;height:17px;background:#ffffff;border:1px solid #bdbcbb;box-sizing:border-box;"></div>
<div style="left:846px;top:702px;width:16px;height:15px;background:#c5c6cc;"></div>
<svg style="left:850px;top:708px" width="9" height="5" viewBox="0 0 9 5"><path d="M0,0 L8.4,0 L4.2,4.4 Z" fill="#111"/></svg>
<span class="t" style="left:595.16px;top:705px;font-size:11px;color:#1a1a1a;transform:scaleX(1.0041);">2</span>
<div style="left:905px;top:577px;width:401px;height:142px;background:#ffffff;border:1px solid #b9b9b9;box-sizing:border-box;"></div>
<svg style="left:1305px;top:546px" width="11" height="15" viewBox="0 0 11 15"><path d="M6.3,0.6 L9.6,2.0 L4.0,12.2 L0.9,14.2 L0.7,10.6 Z" fill="#3a3d4a"/><path d="M6.6,1.9 L8.6,2.8 L8.0,3.9 L6.0,3.0 Z" fill="#ffffff"/><path d="M1.3,11.6 L2.9,12.4 L1.2,13.5 Z" fill="#ffffff"/></svg>
<div style="left:1323px;top:335px;width:13px;height:392px;background:#fafafa;"></div>
<svg style="left:1328px;top:341px" width="7" height="5" viewBox="0 0 7 5"><path d="M0,4.4 L7,4.4 L3.5,0 Z" fill="#777"/></svg>
<svg style="left:1328px;top:717px" width="7" height="5" viewBox="0 0 7 5"><path d="M0,0 L7,0 L3.5,4.4 Z" fill="#777"/></svg>
<div style="left:1328px;top:350px;width:7px;height:354px;background:#d1d2da;border:1px solid #a9acb8;box-sizing:border-box;border-radius:4px;"></div>
<div style="left:0px;top:729px;width:1336px;height:41px;background:#f4f4f4;"></div>
<div style="left:0px;top:770px;width:1336px;height:1px;background:#fbfbfb;"></div>
<div style="left:0px;top:771px;width:1336px;height:1px;background:#1e1e1e;"></div>
<div style="left:1086px;top:740px;width:120px;height:25px;background:#e9eaed;border:1px solid #c2c3c8;box-sizing:border-box;"></div>
<div style="left:1210px;top:740px;width:120px;height:25px;background:#e9eaed;border:1px solid #c2c3c8;box-sizing:border-box;"></div>
<span class="t" style="left:1120.26px;top:747px;font-size:11px;color:#8e909c;transform:scaleX(1.0347);-webkit-text-stroke:0.3px #8e909c;">Verwerfen</span>
<span class="t" style="left:1245.06px;top:747px;font-size:11px;color:#8e909c;transform:scaleX(0.9940);-webkit-text-stroke:0.3px #8e909c;">Speichern</span>
<div style="left:13px;top:65px;width:227px;height:700px;background:#ffffff;border:1px solid #8a8f9b;box-sizing:border-box;"></div>
<div style="left:14px;top:66px;width:30px;height:698px;background:#f6f6f6;"></div>
<div style="left:239px;top:66px;width:1px;height:698px;background:#a2a7b1;"></div>
<div style="left:44px;top:156px;width:195px;height:1px;background:#d9d9d9;"></div>
<div style="left:44px;top:247px;width:195px;height:1px;background:#d9d9d9;"></div>
<div style="left:44px;top:278px;width:195px;height:1px;background:#d9d9d9;"></div>
<div style="left:44px;top:309px;width:195px;height:1px;background:#d9d9d9;"></div>
<div style="left:44px;top:550px;width:195px;height:1px;background:#d9d9d9;"></div>
<div style="left:44px;top:643px;width:195px;height:1px;background:#d9d9d9;"></div>
<span class="t" style="left:48.96px;top:77px;font-size:11px;color:#1a1a1a;transform:scaleX(0.9833);">Neu</span>
<span class="t" style="left:48.96px;top:107px;font-size:11px;color:#1a1a1a;transform:scaleX(0.9796);">Kopieren</span>
<span class="t" style="left:48.96px;top:137px;font-size:11px;color:#1a1a1a;transform:scaleX(0.9533);">Löschen</span>
<span class="t" style="left:48.96px;top:168px;font-size:11px;color:#1a1a1a;transform:scaleX(1.0192);">Memo</span>
<span class="t" style="left:48.96px;top:198px;font-size:11px;color:#1a1a1a;transform:scaleX(0.9962);">Wiedervorlage</span>
<span class="t" style="left:48.96px;top:228px;font-size:11px;color:#1a1a1a;transform:scaleX(0.9820);">Sammelmappe</span>
<span class="t" style="left:48.96px;top:259px;font-size:11px;color:#1a1a1a;transform:scaleX(0.9944);">Auskünfte</span>
<svg style="left:228px;top:258px" width="6" height="10" viewBox="0 0 6 10"><path d="M0.9,1.0 L4.9,4.65 L0.9,8.3" fill="none" stroke="#3c3c3c" stroke-width="1.05"/></svg>
<span class="t" style="left:48.96px;top:290px;font-size:11px;color:#1a1a1a;transform:scaleX(0.9498);">Bestände</span>
<svg style="left:228px;top:289px" width="6" height="10" viewBox="0 0 6 10"><path d="M0.9,1.0 L4.9,4.65 L0.9,8.3" fill="none" stroke="#3c3c3c" stroke-width="1.05"/></svg>
<span class="t" style="left:48.96px;top:321px;font-size:11px;color:#1a1a1a;transform:scaleX(0.9026);">Preise</span>
<svg style="left:228px;top:320px" width="6" height="10" viewBox="0 0 6 10"><path d="M0.9,1.0 L4.9,4.65 L0.9,8.3" fill="none" stroke="#3c3c3c" stroke-width="1.05"/></svg>
<span class="t" style="left:48.96px;top:351px;font-size:11px;color:#1a1a1a;transform:scaleX(1.0183);">Artikelplanungstool</span>
<span class="t" style="left:48.96px;top:381px;font-size:11px;color:#1a1a1a;transform:scaleX(0.9631);">Sachmerkmale</span>
<span class="t" style="left:48.96px;top:411px;font-size:11px;color:#1a1a1a;transform:scaleX(1.0201);">Produktion</span>
<svg style="left:228px;top:410px" width="6" height="10" viewBox="0 0 6 10"><path d="M0.9,1.0 L4.9,4.65 L0.9,8.3" fill="none" stroke="#3c3c3c" stroke-width="1.05"/></svg>
<span class="t" style="left:48.96px;top:441px;font-size:11px;color:#9b9b9b;transform:scaleX(0.9791);">Webshop-Eigenschaften</span>
<span class="t" style="left:48.96px;top:471px;font-size:11px;color:#9b9b9b;transform:scaleX(1.0068);">Dokumente</span>
<svg style="left:228px;top:470px" width="6" height="10" viewBox="0 0 6 10"><path d="M0.9,1.0 L4.9,4.65 L0.9,8.3" fill="none" stroke="#8a8a8a" stroke-width="1.05"/></svg>
<span class="t" style="left:48.96px;top:501px;font-size:11px;color:#9b9b9b;transform:scaleX(1.0276);">Produktkonfigurator</span>
<svg style="left:228px;top:500px" width="6" height="10" viewBox="0 0 6 10"><path d="M0.9,1.0 L4.9,4.65 L0.9,8.3" fill="none" stroke="#8a8a8a" stroke-width="1.05"/></svg>
<span class="t" style="left:48.96px;top:531px;font-size:11px;color:#1a1a1a;transform:scaleX(0.9355);">xRM</span>
<svg style="left:228px;top:530px" width="6" height="10" viewBox="0 0 6 10"><path d="M0.9,1.0 L4.9,4.65 L0.9,8.3" fill="none" stroke="#3c3c3c" stroke-width="1.05"/></svg>
<span class="t" style="left:48.96px;top:562px;font-size:11px;color:#9b9b9b;transform:scaleX(1.0433);">Mutationsprotokoll</span>
<svg style="left:228px;top:561px" width="6" height="10" viewBox="0 0 6 10"><path d="M0.9,1.0 L4.9,4.65 L0.9,8.3" fill="none" stroke="#8a8a8a" stroke-width="1.05"/></svg>
<div style="left:14px;top:582px;width:225px;height:30px;background:#1f429a;"></div>
<span class="t" style="left:48.96px;top:593px;font-size:11px;color:#ffffff;transform:scaleX(0.9989);-webkit-text-stroke:0.15px #ffffff;">Softfolio Shopware 6 Connector</span>
<svg style="left:228px;top:592px" width="6" height="10" viewBox="0 0 6 10"><path d="M0.9,1.0 L4.9,4.65 L0.9,8.3" fill="none" stroke="#ffffff" stroke-width="1.05"/></svg>
<span class="t" style="left:48.96px;top:624px;font-size:11px;color:#1a1a1a;transform:scaleX(0.9592);">Sachmerkmalsuche</span>
<span class="t" style="left:48.96px;top:655px;font-size:11px;color:#1a1a1a;transform:scaleX(1.0171);">Listendruck/-export</span>
<span class="t" style="left:48.96px;top:685px;font-size:11px;color:#1a1a1a;transform:scaleX(0.9869);">Listenexport</span>
<svg style="left:228px;top:684px" width="6" height="10" viewBox="0 0 6 10"><path d="M0.9,1.0 L4.9,4.65 L0.9,8.3" fill="none" stroke="#3c3c3c" stroke-width="1.05"/></svg>
<span class="t" style="left:48.96px;top:715px;font-size:11px;color:#1a1a1a;transform:scaleX(0.9786);">Einstellungen</span>
<svg style="left:228px;top:714px" width="6" height="10" viewBox="0 0 6 10"><path d="M0.9,1.0 L4.9,4.65 L0.9,8.3" fill="none" stroke="#3c3c3c" stroke-width="1.05"/></svg>
<span class="t" style="left:48.96px;top:745px;font-size:11px;color:#1a1a1a;transform:scaleX(0.9912);">Darstellung</span>
<svg style="left:228px;top:744px" width="6" height="10" viewBox="0 0 6 10"><path d="M0.9,1.0 L4.9,4.65 L0.9,8.3" fill="none" stroke="#3c3c3c" stroke-width="1.05"/></svg>
<span class="t" style="left:190.26px;top:77px;font-size:11px;color:#1a1a1a;transform:scaleX(1.0175);">Strg+N</span>
<div style="left:239px;top:582px;width:235px;height:92px;background:#ffffff;border:1px solid #8a8f9b;box-sizing:border-box;"></div>
<div style="left:240px;top:583px;width:30px;height:90px;background:#f5f5f5;"></div>
<span class="t" style="left:274.76px;top:594px;font-size:11px;color:#1a1a1a;transform:scaleX(1.0023);">Artikel Export/Aktualisieren</span>
<span class="t" style="left:274.76px;top:624px;font-size:11px;color:#1a1a1a;transform:scaleX(0.9918);">Artikel löschen (nur Webshop)</span>
<span class="t" style="left:274.76px;top:654px;font-size:11px;color:#1a1a1a;transform:scaleX(0.9931);">SW-Produkt verknüpfen (manuell)</span>
<div style="left:238px;top:642px;width:239px;height:31px;border:3px solid #fb0707;border-radius:2.5px;box-sizing:border-box"></div>
</body></html>
